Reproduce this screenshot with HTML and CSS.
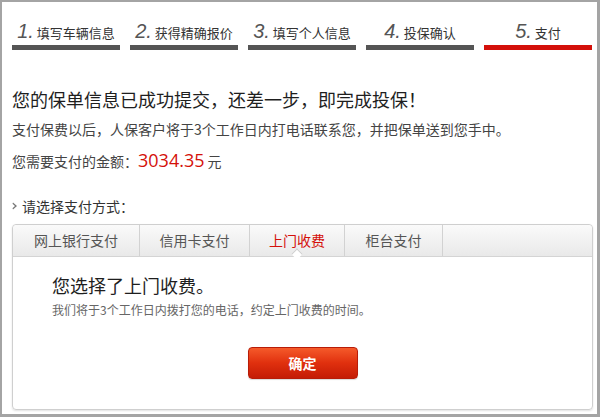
FILE: index.html
```html
<!DOCTYPE html>
<html lang="zh">
<head>
<meta charset="utf-8">
<title>支付</title>
<link rel="stylesheet" href="styles.css">
</head>
<body>
<div class="frame">
  <ol class="steps">
    <li class="step"><div class="label"><span class="num">1.</span><span class="txt">填写车辆信息</span></div><div class="bar"></div></li>
    <li class="step"><div class="label"><span class="num">2.</span><span class="txt">获得精确报价</span></div><div class="bar"></div></li>
    <li class="step"><div class="label"><span class="num">3.</span><span class="txt">填写个人信息</span></div><div class="bar"></div></li>
    <li class="step"><div class="label"><span class="num">4.</span><span class="txt">投保确认</span></div><div class="bar"></div></li>
    <li class="step current"><div class="label"><span class="num">5.</span><span class="txt">支付</span></div><div class="bar"></div></li>
  </ol>

  <h1 class="heading">您的保单信息已成功提交，还差一步，即完成投保！</h1>
  <p class="desc">支付保费以后，人保客户将于3个工作日内打电话联系您，并把保单送到您手中。</p>
  <p class="amount">您需要支付的金额：<span class="money">3034.35</span> 元</p>

  <p class="choose"><svg class="chev" width="6" height="8" viewBox="0 0 6 8"><path d="M1 0.5 L5 4 L1 7.5 L0.5 6.3 L3 4 L0.5 1.7 Z" fill="#777"/></svg>请选择支付方式：</p>

  <div class="tabbox">
    <ul class="tabs">
      <li class="tab t1">网上银行支付</li>
      <li class="tab t2">信用卡支付</li>
      <li class="tab t3 active">上门收费<span class="notch"></span></li>
      <li class="tab t4">柜台支付</li>
    </ul>
    <div class="panel">
      <h2 class="ptitle">您选择了上门收费。</h2>
      <p class="pdesc">我们将于3个工作日内拨打您的电话，约定上门收费的时间。</p>
      <div class="actions"><button class="btn">确定</button></div>
    </div>
  </div>
</div>
</body>
</html>
```

FILE: styles.css
```css
html, body {
  margin: 0;
  padding: 0;
  background: #fff;
}

.frame {
  box-sizing: border-box;
  width: 600px;
  height: 417px;
  border: 2px solid #a4a4a4;
  border-right-width: 3px;
  border-bottom-width: 3px;
  padding: 0 5px 0 10px;
  font-family: "Noto Sans CJK SC", "Noto Sans", sans-serif;
  color: #333;
  overflow: hidden;
}

.steps {
  list-style: none;
  margin: 17px 0 0 0;
  padding: 0;
  display: flex;
  gap: 10px;
}

.step {
  width: 108px;
}

.label {
  height: 24px;
  display: flex;
  justify-content: center;
  align-items: baseline;
  gap: 3px;
  white-space: nowrap;
}

.num {
  font-family: "Liberation Sans", sans-serif;
  font-style: italic;
  font-size: 20px;
  line-height: 24px;
  color: #555;
}

.txt {
  font-size: 13px;
  line-height: 24px;
  color: #333;
}

.bar {
  height: 5px;
  margin-top: 2px;
  background: #555;
}

.current .bar {
  background: #d4100a;
}

.heading {
  margin: 37px 0 0 0;
  font-size: 18px;
  font-weight: normal;
  line-height: 24px;
  color: #1e1e1e;
}

.desc {
  margin: 8px 0 0 0;
  font-size: 14px;
  line-height: 20px;
  color: #444;
}

.amount {
  margin: 11px 0 0 0;
  font-size: 14px;
  line-height: 20px;
  color: #444;
}

.money {
  font-family: "Open Sans", "Noto Sans", sans-serif;
  font-size: 18px;
  line-height: 20px;
  color: #d4100a;
}

.choose {
  margin: 25px 0 0 0;
  font-size: 14px;
  line-height: 20px;
  color: #333;
  display: flex;
  align-items: center;
  gap: 4px;
}

.chev {
  display: block;
}

.tabbox {
  margin: 8px 0 0 0;
  width: 581px;
  box-sizing: border-box;
  border: 1px solid #cfcfcf;
  border-radius: 4px;
  box-shadow: 0 1px 2px rgba(0,0,0,0.12);
}

.tabs {
  list-style: none;
  margin: 0;
  padding: 0;
  display: flex;
  height: 31px;
  border-bottom: 1px solid #d4d4d4;
  border-radius: 4px 4px 0 0;
  background: linear-gradient(#fafafa, #e9e9e9);
}

.tab {
  position: relative;
  box-sizing: border-box;
  text-align: center;
  font-size: 14px;
  line-height: 31px;
  color: #555;
  border-right: 1px solid #d2d2d2;
  white-space: nowrap;
}

.t1 { width: 127px; }
.t2 { width: 110px; }
.t3 { width: 95px; }
.t4 { width: 98px; }

.tab.active {
  color: #d4100a;
}

.notch {
  position: absolute;
  left: 50%;
  bottom: -2px;
  width: 7px;
  height: 7px;
  margin-left: -4px;
  background: #fff;
  border-left: 1px solid #cfcfcf;
  border-top: 1px solid #cfcfcf;
  transform: rotate(45deg);
}

.panel {
  padding: 16px 0 30px 39px;
}

.ptitle {
  margin: 0;
  font-size: 18px;
  font-weight: normal;
  line-height: 24px;
  color: #1e1e1e;
}

.pdesc {
  margin: 4px 0 0 0;
  font-size: 12px;
  line-height: 18px;
  color: #666;
}

.actions {
  display: flex;
  justify-content: center;
  margin: 28px 0 0 -39px;
}

.btn {
  width: 110px;
  height: 32px;
  border: 1px solid #b81c08;
  border-radius: 4px;
  background: linear-gradient(#f55a2a, #e0300e 50%, #c41c06);
  color: #fff;
  font-family: "Noto Sans CJK SC", sans-serif;
  font-size: 14px;
  font-weight: bold;
  box-shadow: 0 1px 1px rgba(0,0,0,0.15);
}
```
